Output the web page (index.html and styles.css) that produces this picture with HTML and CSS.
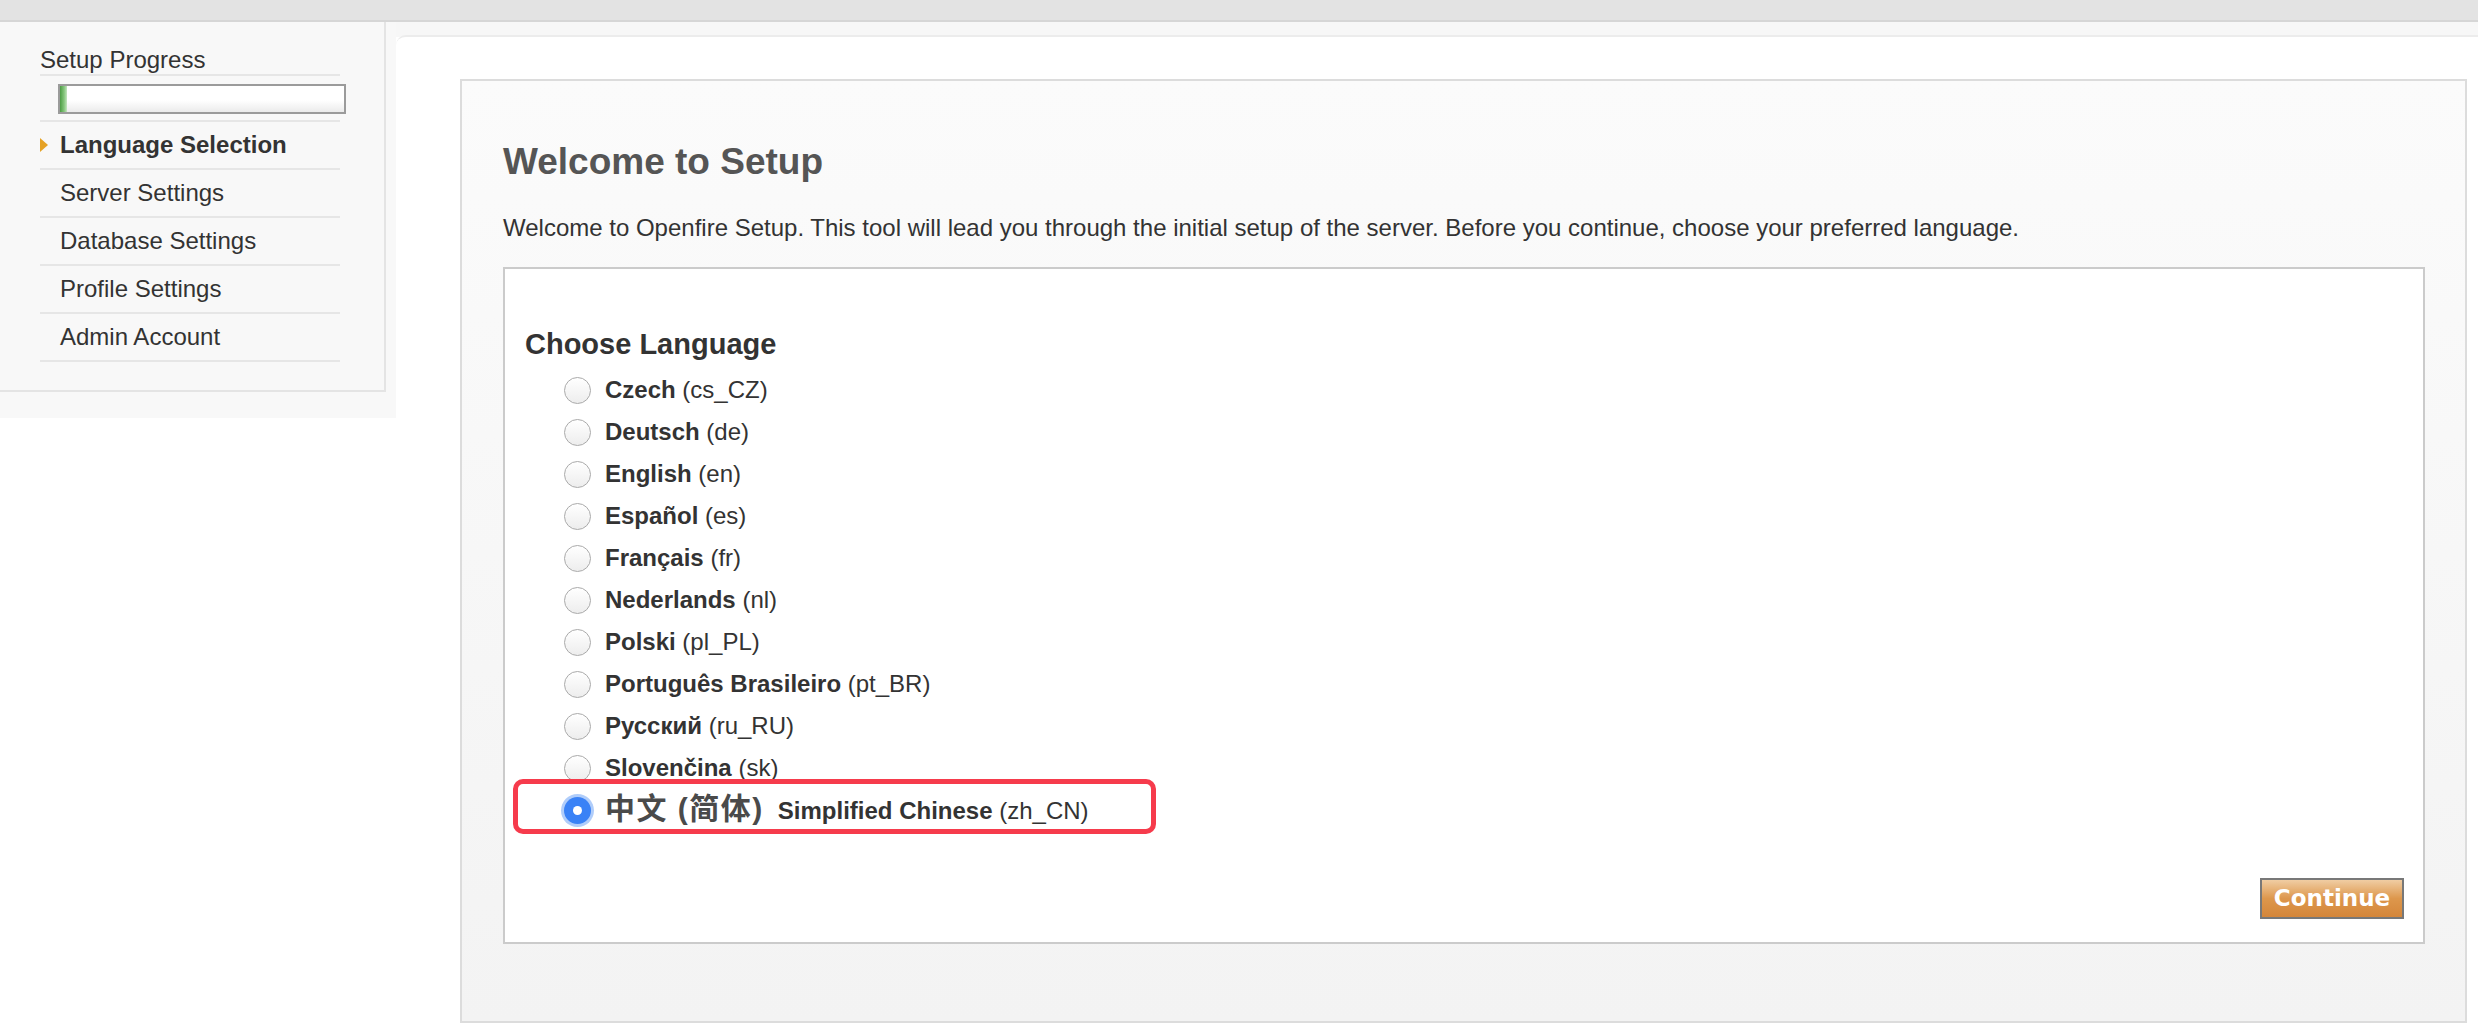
FILE: index.html
```html
<!DOCTYPE html>
<html lang="en">
<head>
<meta charset="utf-8">
<title>Openfire Setup</title>
<link rel="stylesheet" href="styles.css">
</head>
<body>
<div class="topbar"></div>
<div class="page">
  <aside class="side-col">
    <div class="sidebar">
      <div class="side-title">Setup Progress</div>
      <div class="progress-row"><div class="progress"><div class="progress-fill"></div></div></div>
      <ul class="steps">
        <li class="step active">Language Selection</li>
        <li class="step">Server Settings</li>
        <li class="step">Database Settings</li>
        <li class="step">Profile Settings</li>
        <li class="step">Admin Account</li>
      </ul>
    </div>
  </aside>
  <main class="main">
    <div class="panel">
      <h1 class="title">Welcome to Setup</h1>
      <p class="intro">Welcome to Openfire Setup. This tool will lead you through the initial setup of the server. Before you continue, choose your preferred language.</p>
      <div class="lang-box">
        <h2 class="lang-title">Choose Language</h2>
        <ul class="langs">
          <li class="lang"><span class="radio"></span><span class="label"><b>Czech</b> (cs_CZ)</span></li>
          <li class="lang"><span class="radio"></span><span class="label"><b>Deutsch</b> (de)</span></li>
          <li class="lang"><span class="radio"></span><span class="label"><b>English</b> (en)</span></li>
          <li class="lang"><span class="radio"></span><span class="label"><b>Español</b> (es)</span></li>
          <li class="lang"><span class="radio"></span><span class="label"><b>Français</b> (fr)</span></li>
          <li class="lang"><span class="radio"></span><span class="label"><b>Nederlands</b> (nl)</span></li>
          <li class="lang"><span class="radio"></span><span class="label"><b>Polski</b> (pl_PL)</span></li>
          <li class="lang"><span class="radio"></span><span class="label"><b>Português Brasileiro</b> (pt_BR)</span></li>
          <li class="lang"><span class="radio"></span><span class="label"><b>Русский</b> (ru_RU)</span></li>
          <li class="lang"><span class="radio"></span><span class="label"><b>Slovenčina</b> (sk)</span></li>
          <li class="lang selected"><span class="radio checked"></span><span class="label"><span class="cjk">中文 (简体)</span><b>Simplified Chinese</b> (zh_CN)</span><span class="highlight"></span></li>
        </ul>
        <div class="actions"><button class="continue" type="button">Continue</button></div>
      </div>
    </div>
  </main>
</div>
</body>
</html>
```
FILE: styles.css
```css
html, body {
  margin: 0;
  background: #fff;
}
body {
  font-family: "Liberation Sans", Arial, sans-serif;
  color: #333;
}
.topbar {
  height: 20px;
  background: #e3e3e3;
  border-bottom: 2px solid #d6d6d6;
}
.page {
  display: flex;
  align-items: flex-start;
  background: linear-gradient(#f7f7f7 0, #f7f7f7 15px, #fff 15px);
}
.side-col {
  flex: none;
  width: 396px;
  height: 396px;
  background: #f8f8f8;
}
.sidebar {
  width: 300px;
  padding: 24px 44px 28px 40px;
  border-right: 2px solid #e4e4e4;
  border-bottom: 2px solid #e4e4e4;
}
.side-title {
  font-size: 24px;
  line-height: 28px;
  color: #333;
  border-bottom: 2px solid #e6e6e6;
}
.progress-row {
  padding: 8px 0 6px 18px;
  border-bottom: 2px solid #e6e6e6;
}
.progress {
  width: 284px;
  height: 26px;
  border: 2px solid #9b9b9b;
  background: linear-gradient(#fff 0, #fff 55%, #ebebeb 100%);
}
.progress-fill {
  width: 7px;
  height: 100%;
  background: linear-gradient(to right, #4c9c44, #86c67d 60%, #c4e5bf);
}
.steps {
  list-style: none;
  margin: 0;
  padding: 0;
}
.step {
  position: relative;
  height: 46px;
  line-height: 46px;
  padding-left: 20px;
  font-size: 24px;
  color: #333;
  border-bottom: 2px solid #e6e6e6;
}
.step.active {
  font-weight: bold;
}
.step.active::before {
  content: "";
  position: absolute;
  left: 0;
  top: 16px;
  border-left: 8px solid #e5a226;
  border-top: 7px solid transparent;
  border-bottom: 7px solid transparent;
}
.main {
  flex: 1;
  margin-top: 13px;
  border-top: 2px solid #ececec;
  border-top-left-radius: 10px;
  background: #fff;
  padding: 42px 11px 11px 64px;
}
.panel {
  border: 2px solid #dcdcdc;
  background: linear-gradient(#fbfbfb, #f3f3f3);
  padding: 60px 40px 77px 41px;
}
.title {
  margin: 0;
  font-size: 37px;
  line-height: 42px;
  font-weight: bold;
  color: #555;
}
.intro {
  margin: 31px 0 25px;
  font-size: 24px;
  line-height: 28px;
  color: #333;
}
.lang-box {
  background: #fff;
  border: 2px solid #cbcbcb;
  padding: 58px 19px 23px 20px;
}
.lang-title {
  margin: 0 0 8px;
  font-size: 29px;
  line-height: 34px;
  font-weight: bold;
  color: #333;
}
.langs {
  list-style: none;
  margin: 0;
  padding: 0 0 0 39px;
}
.lang {
  position: relative;
  display: flex;
  align-items: center;
  height: 42px;
  font-size: 24px;
  color: #333;
}
.radio {
  flex: none;
  position: relative;
  box-sizing: border-box;
  width: 27px;
  height: 27px;
  margin-right: 14px;
  border-radius: 50%;
  border: 1.5px solid #aaa;
  background: linear-gradient(#fff, #ededed);
}
.radio.checked {
  border: none;
  background: #3a82f6;
  box-shadow: 0 0 0 3px rgba(80, 145, 245, 0.45);
}
.radio.checked::after {
  content: "";
  position: absolute;
  left: 50%;
  top: 50%;
  width: 9px;
  height: 9px;
  margin: -4.5px 0 0 -4.5px;
  border-radius: 50%;
  background: #fff;
}
.label {
  white-space: nowrap;
  line-height: 42px;
}
.cjk {
  font-family: "Liberation Sans", "Noto Sans CJK SC", sans-serif;
  font-size: 30px;
  font-weight: bold;
  letter-spacing: 1.5px;
  margin-right: 14px;
  color: #4a4a4a;
}
.highlight {
  position: absolute;
  left: -51px;
  top: -10px;
  width: 643px;
  height: 55px;
  box-sizing: border-box;
  border: 5px solid #f63b4c;
  border-radius: 10px;
  pointer-events: none;
}
.actions {
  display: flex;
  justify-content: flex-end;
  margin-top: 47px;
}
.continue {
  width: 144px;
  height: 41px;
  padding: 0;
  border: 2px solid #787878;
  background: linear-gradient(#f0cda3, #dd974c 50%, #d4863a);
  color: #fff;
  font-family: "DejaVu Sans", Verdana, sans-serif;
  font-weight: bold;
  font-size: 23px;
  line-height: 37px;
}
```
